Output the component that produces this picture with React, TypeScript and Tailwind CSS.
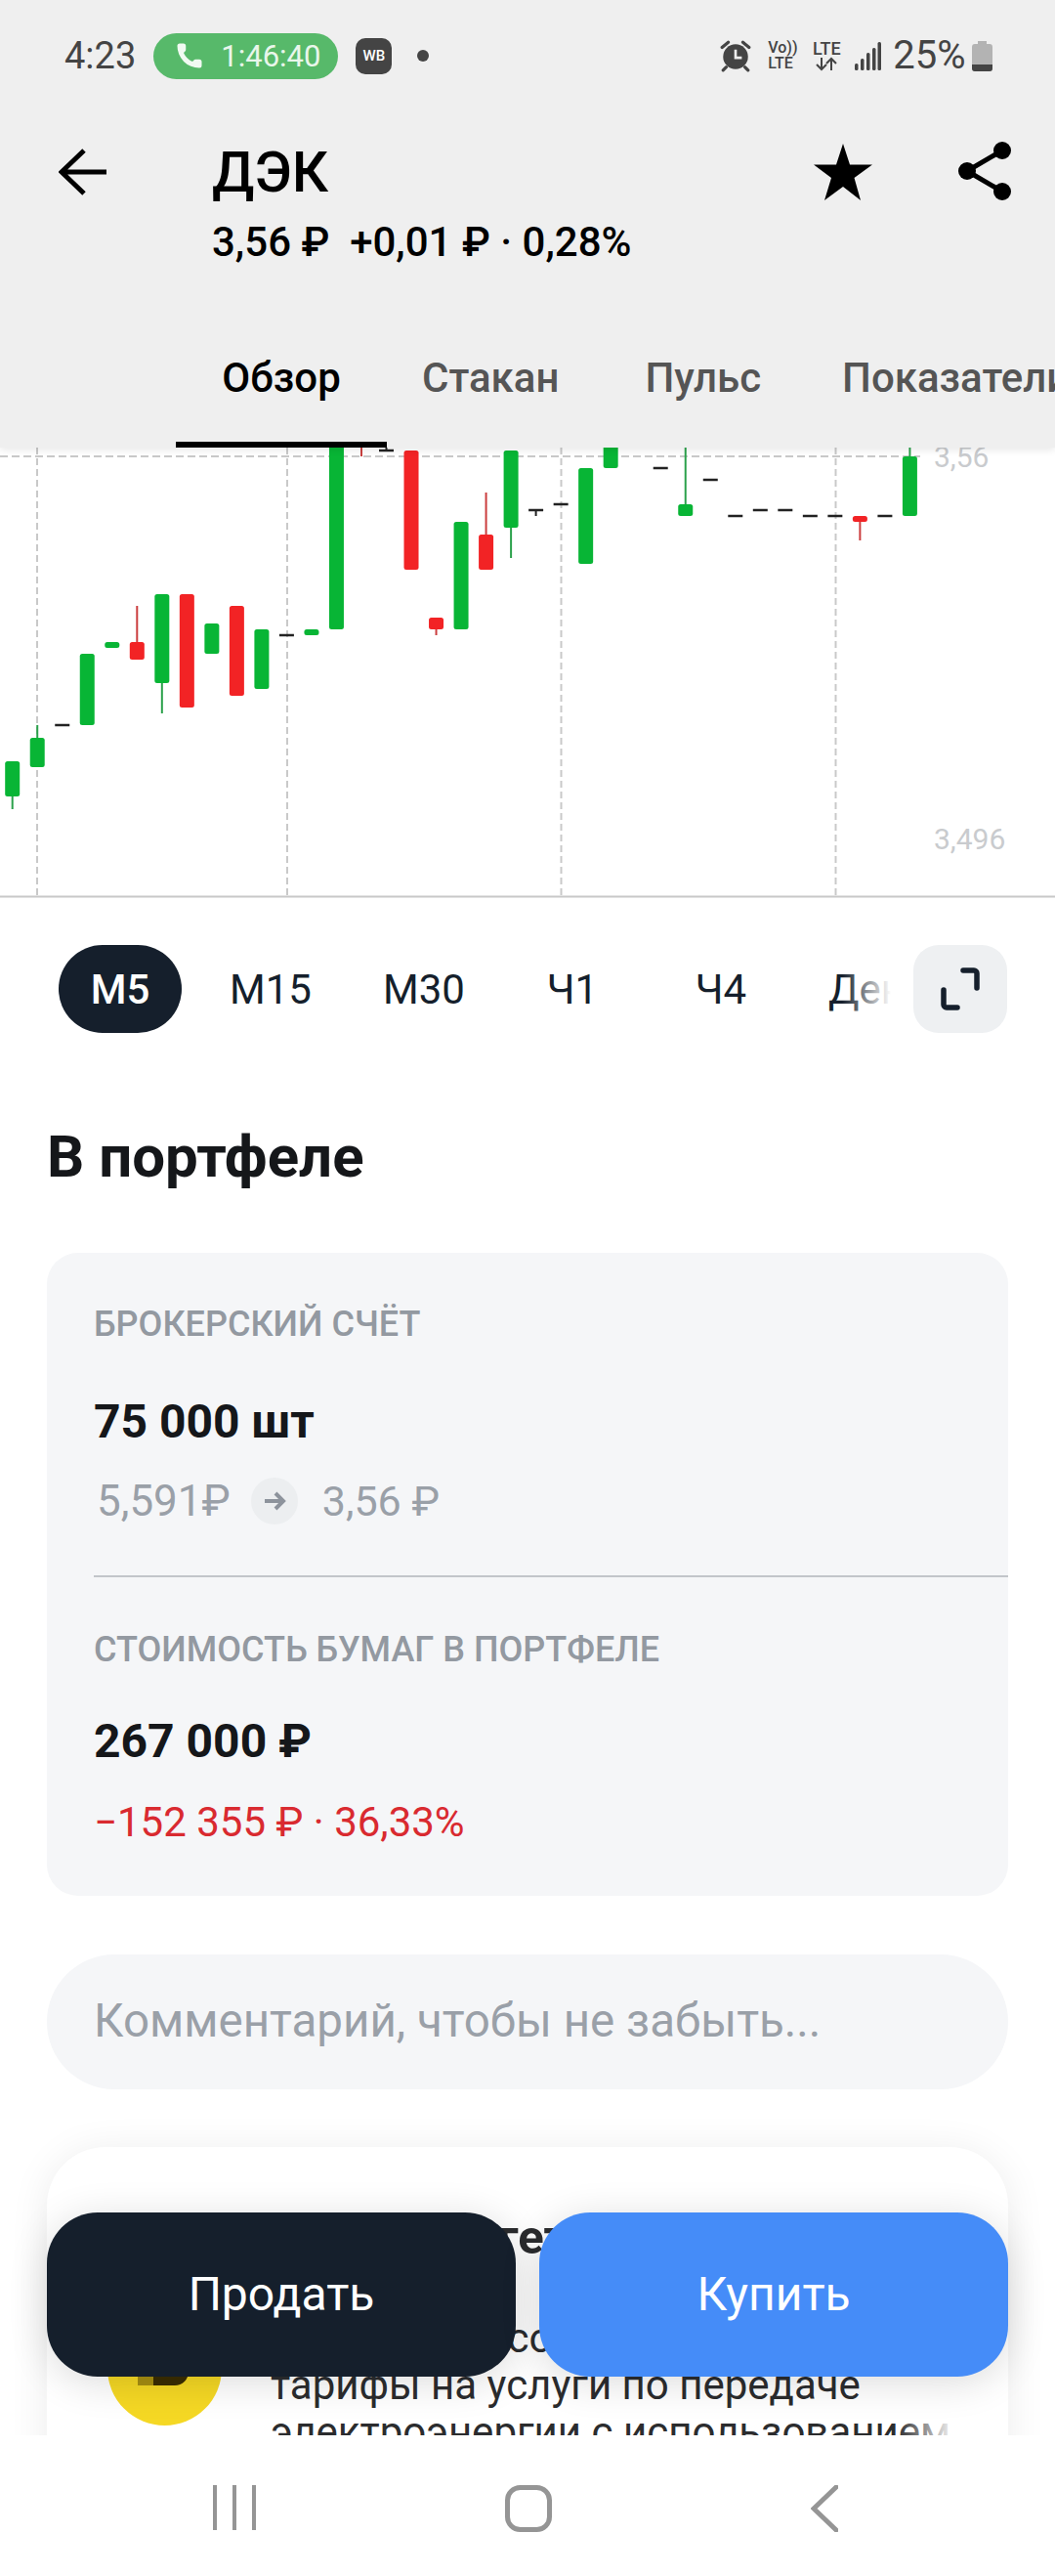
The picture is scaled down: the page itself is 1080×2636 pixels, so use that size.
import { Phone } from 'lucide-react';

const GREEN = '#08b535';
const RED = '#f22325';

// [индекс, верх тела, низ тела, верх тени, низ тени]
type Candle = [number, number, number, number?, number?];

const greenCandles: Candle[] = [
  [0, 779, 815, 779, 828],
  [1, 755, 785, 742, 785],
  [3, 669, 742],
  [4, 657, 663],
  [6, 608, 699, 608, 730],
  [8, 638, 669],
  [10, 644, 705],
  [12, 644, 650],
  [13, 440, 644],
  [18, 534, 644],
  [20, 461, 540, 461, 571],
  [23, 479, 577],
  [24, 440, 479],
  [27, 516, 528, 440, 528],
  [36, 467, 528, 440, 528],
];

const redCandles: Candle[] = [
  [5, 657, 675, 620, 675],
  [7, 608, 724],
  [9, 620, 712],
  [16, 461, 583],
  [17, 632, 644, 632, 650],
  [19, 547, 583, 504, 583],
  [34, 528, 534, 528, 553],
];

const dashes: [number, number][] = [
  [2, 742], [11, 650], [15, 461], [21, 522], [22, 516], [26, 479], [28, 491],
  [29, 528], [30, 522], [31, 522], [32, 528], [33, 528], [35, 528],
];

const candleX = (i: number) => 12.7 + i * 25.52;
const top = 458;

const Chart = () => (
  <svg width="1080" height="461" viewBox={`0 ${top} 1080 461`} className="block">
    {[38, 294, 574.5, 855.5].map((x) => (
      <line key={x} x1={x} x2={x} y1={458} y2={917} stroke="#c9c9c9" strokeWidth="2" strokeDasharray="7 4" />
    ))}
    <line x1={0} x2={942} y1={467} y2={467} stroke="#c9c9c9" strokeWidth="2" strokeDasharray="8 4" />
    <line x1={0} x2={1080} y1={917.5} y2={917.5} stroke="#c8c8c8" strokeWidth="2" />
    <line x1={candleX(14)} x2={candleX(14)} y1={458} y2={467} stroke="#c9403f" strokeWidth="2" />
    <line x1={candleX(15)} x2={candleX(15)} y1={456} y2={461} stroke="#222" strokeWidth="2" />
    <line x1={candleX(21)} x2={candleX(21)} y1={522} y2={528} stroke="#222" strokeWidth="2" />
    {greenCandles.map(([i, a, b, w1, w2]) => (
      <g key={i}>
        {w1 !== undefined && <line x1={candleX(i)} x2={candleX(i)} y1={w1} y2={w2} stroke="#2ba14b" strokeWidth="2" />}
        <rect x={candleX(i) - 7.5} y={a} width="15" height={b - a} rx="2.5" fill={GREEN} />
      </g>
    ))}
    {redCandles.map(([i, a, b, w1, w2]) => (
      <g key={i}>
        {w1 !== undefined && <line x1={candleX(i)} x2={candleX(i)} y1={w1} y2={w2} stroke="#cb3d3e" strokeWidth="2" />}
        <rect x={candleX(i) - 7.5} y={a} width="15" height={b - a} rx="2.5" fill={RED} />
      </g>
    ))}
    {dashes.map(([i, y]) => (
      <line key={i} x1={candleX(i) - 7.5} x2={candleX(i) + 7.5} y1={y} y2={y} stroke="#222" strokeWidth="2.5" />
    ))}
    <text x="956" y="478" fontFamily="Roboto" fontSize="30" fill="#c9cbce">3,56</text>
    <text x="956" y="869" fontFamily="Roboto" fontSize="30" fill="#c9cbce">3,496</text>
  </svg>
);

const StatusBar = () => (
  <div className="h-[114px] flex items-center pl-[66px] text-[#444]">
    <span className="text-[38px] leading-none">4:23</span>
    <div className="ml-[18px] w-[189px] h-[47px] rounded-full bg-[#57b96a] flex items-center text-[#e9f6eb]">
      <Phone size={30} fill="#f1faf2" strokeWidth={0} className="ml-[22px] mr-[17px]" />
      <span className="text-[31px] leading-none">1:46:40</span>
    </div>
    <div className="ml-[18px] w-[37px] h-[37px] rounded-[10px] bg-[#444] text-white text-[15px] font-medium flex items-center justify-center">WB</div>
    <div className="ml-[26px] w-[12px] h-[12px] rounded-full bg-[#444]" />

    {/* будильник */}
    <svg width="32" height="34" viewBox="0 0 30 32" className="ml-[298px]">
      <circle cx="15" cy="17" r="12" fill="#444" />
      <path d="M15 10v8h6" fill="none" stroke="#eee" strokeWidth="2.5" />
      <path d="M2 8l6-5M28 8l-6-5M6 27l-3 3M24 27l3 3" stroke="#444" strokeWidth="3" strokeLinecap="round" />
    </svg>
    <div className="ml-[17px] w-[32px] flex flex-col text-[16px] leading-[16px] font-medium">
      <span>Vo))</span>
      <span>LTE</span>
    </div>
    <div className="ml-[11px] w-[34px] flex flex-col items-center text-[18px] leading-[16px] font-medium">
      <span>LTE</span>
      <svg width="24" height="15" viewBox="0 0 24 15">
        <path d="M7 1v12M2 8l5 5 5-5M17 14V2M12 7l5-5 5 5" fill="none" stroke="#444" strokeWidth="2" />
      </svg>
    </div>
    <svg width="27" height="29" viewBox="0 0 27 29" className="ml-[12px]">
      <rect x="0" y="22" width="3.5" height="7" rx="1.5" fill="#444" />
      <rect x="6" y="17" width="3.5" height="12" rx="1.5" fill="#444" />
      <rect x="12" y="11" width="3.5" height="18" rx="1.5" fill="#444" />
      <rect x="18" y="6" width="3.5" height="23" rx="1.5" fill="#444" />
      <rect x="23.5" y="0" width="3.5" height="29" rx="1.5" fill="#444" />
    </svg>
    <span className="ml-[12px] text-[40px] leading-none">25%</span>
    <svg width="21" height="31" viewBox="0 0 21 31" className="ml-[6px]">
      <path d="M6 0h9v3h3a3 3 0 0 1 3 3v22a3 3 0 0 1-3 3H3a3 3 0 0 1-3-3V6a3 3 0 0 1 3-3h3z" fill="#b3b3b3" />
      <path d="M0 24h21v4a3 3 0 0 1-3 3H3a3 3 0 0 1-3-3z" fill="#444" />
    </svg>
  </div>
);

const Header = () => (
  <div className="relative z-10 h-[458px] bg-[#efefef] flex flex-col shadow-[0_2px_8px_rgba(0,0,0,0.1)]">
    <StatusBar />
    <div className="flex items-start pl-[60px] pr-[45px]">
      <svg width="50" height="48" viewBox="0 0 50 48" className="mt-[38px] mr-[107px]">
        <path d="M26 2L3 24l23 22M3 24h46" fill="none" stroke="#000" strokeWidth="5" />
      </svg>
      <div className="flex flex-col pt-[30px] text-black">
        <span className="text-[58px] leading-[64px] font-medium">ДЭК</span>
        <span className="mt-[17px] text-[42px] leading-[46px] font-medium whitespace-pre">3,56 ₽  +0,01 ₽ · 0,28%</span>
      </div>
      <svg width="60" height="58" viewBox="0 0 60 58" className="ml-auto mt-[33px]">
        <path d="M30 0l7 21.5h23L41.5 35 48 58 30 44 11 58l7-23L0 21.5h23z" fill="#000" />
      </svg>
      <svg width="54" height="60" viewBox="0 0 54 60" className="ml-[88px] mt-[31px]">
        <path d="M45 9L9 30l36 21" fill="none" stroke="#000" strokeWidth="5" />
        <circle cx="45" cy="9" r="9" fill="#000" />
        <circle cx="9" cy="30" r="9" fill="#000" />
        <circle cx="45" cy="51" r="9" fill="#000" />
      </svg>
    </div>
    <div className="mt-auto h-[96px] flex pl-[180px] text-[42px] leading-[50px] font-medium text-[#555] whitespace-nowrap overflow-hidden">
      <div className="w-[216px] shrink-0 h-full text-center text-black border-b-[6px] border-black">Обзор</div>
      <div className="ml-[36px] shrink-0">Стакан</div>
      <div className="ml-[88px] shrink-0">Пульс</div>
      <div className="ml-[83px] shrink-0">Показатели</div>
    </div>
  </div>
);

const Periods = () => (
  <div className="mt-[48px] h-[90px] flex pl-[60px] pr-[48px]">
    <div className="relative w-[852px] flex items-center overflow-hidden text-[42px] text-[#151f2c] whitespace-nowrap">
      <div className="w-[126px] h-[90px] shrink-0 rounded-[45px] bg-[#151f2c] text-white font-medium flex items-center justify-center">М5</div>
      <div className="w-[182px] shrink-0 text-center">М15</div>
      <div className="w-[132px] shrink-0 text-center">М30</div>
      <div className="w-[172px] shrink-0 text-center">Ч1</div>
      <div className="w-[132px] shrink-0 text-center">Ч4</div>
      <div className="pl-[44px] shrink-0">День</div>
      <div className="absolute right-0 inset-y-0 w-[50px] bg-gradient-to-r from-transparent to-white" />
    </div>
    <div className="ml-[23px] w-[96px] h-[90px] rounded-[26px] bg-[#eef0f2] flex items-center justify-center">
      <svg width="44" height="44" viewBox="0 0 44 44">
        <path d="M25 3h11a3 3 0 0 1 3 3v15M5 23v15a3 3 0 0 0 3 3h11" fill="none" stroke="#151f2c" strokeWidth="5.5" strokeLinecap="round" />
      </svg>
    </div>
  </div>
);

const Portfolio = () => (
  <div className="mt-[66px] mx-[48px] rounded-[32px] bg-[#f5f6f8] pt-[51px] pb-[51px] pl-[48px]">
    <div className="text-[36px] leading-[44px] font-medium text-[#9399a1]">БРОКЕРСКИЙ СЧЁТ</div>
    <div className="mt-[50px] text-[48px] leading-[56px] font-bold text-[#15171a]">75 000 шт</div>
    <div className="mt-[29px] h-[48px] flex items-center text-[43px] text-[#9aa0a8]">
      <span className="ml-[3px] text-[44px]">5,591₽</span>
      <div className="ml-[21px] w-[48px] h-[48px] rounded-full bg-[#eceef0] flex items-center justify-center">
        <svg width="24" height="22" viewBox="0 0 24 22">
          <path d="M2 11h19M13 3l8 8-8 8" fill="none" stroke="#8d939c" strokeWidth="4" />
        </svg>
      </div>
      <span className="ml-[25px]">3,56 ₽</span>
    </div>
    <div className="mt-[52px] h-[2px] bg-[#c2c5ca]" />
    <div className="mt-[52px] text-[36px] leading-[44px] font-medium text-[#9399a1]">СТОИМОСТЬ БУМАГ В ПОРТФЕЛЕ</div>
    <div className="mt-[44px] text-[48px] leading-[56px] font-bold text-[#15171a]">267 000 ₽</div>
    <div className="mt-[31px] text-[42px] leading-[48px] text-[#d92a30]">−152 355 ₽ · 36,33%</div>
  </div>
);

const NewsCard = () => (
  <div className="relative mt-[59px] mx-[48px] h-[500px] rounded-[60px] bg-white shadow-[0_4px_40px_rgba(0,0,0,0.08)] flex overflow-hidden">
    <div className="relative mt-[168px] ml-[62px] w-[117px] h-[117px] shrink-0 rounded-full bg-[#f5d824]">
      <div className="absolute left-[31px] top-[20px] w-[16px] h-[56px] bg-[#a78f12]" />
      <div className="absolute left-[47px] top-[20px] w-[36px] h-[56px] rounded-br-[14px] bg-[#3a2d02]" />
    </div>
    <div className="ml-[50px] pt-[65px] w-[700px] text-[#2b2c2e]">
      <div className="text-[49px] leading-[56px] font-bold whitespace-nowrap">ДЭК: энергетика</div>
      <div className="mt-[51px] text-[42px] leading-[48px] whitespace-nowrap">
        <div>Регуляторы согласовали</div>
        <div>тарифы на услуги по передаче</div>
        <div>электроэнергии с использованием</div>
      </div>
    </div>
    <div className="absolute left-[870px] top-[275px] w-[60px] h-[50px] bg-gradient-to-r from-transparent to-white" />
  </div>
);

const BottomBar = () => (
  <div className="absolute inset-x-0 bottom-0 z-20">
    <div className="px-[48px] pb-[60px] flex gap-[24px] text-[48px] text-white">
      <div className="w-[480px] h-[168px] rounded-[52px] bg-[#151f2c] flex items-center justify-center shadow-[0_6px_40px_rgba(0,0,0,0.14)]">Продать</div>
      <div className="w-[480px] h-[168px] rounded-[52px] bg-[#458cf8] flex items-center justify-center shadow-[0_6px_40px_rgba(0,0,0,0.14)]">Купить</div>
    </div>
    <div className="h-[144px] bg-white flex items-start pt-[51px] pl-[218px]">
      <svg width="44" height="46" viewBox="0 0 44 46">
        <path d="M2 0v46M22 0v46M42 0v46" stroke="#959595" strokeWidth="4" />
      </svg>
      <svg width="48" height="48" viewBox="0 0 48 48" className="ml-[255px]">
        <rect x="2.5" y="2.5" width="43" height="43" rx="13" fill="none" stroke="#959595" strokeWidth="5" />
      </svg>
      <svg width="28" height="48" viewBox="0 0 28 48" className="ml-[265px]">
        <path d="M26 2L3 24l23 22" fill="none" stroke="#959595" strokeWidth="5" strokeLinecap="round" />
      </svg>
    </div>
  </div>
);

export default function App() {
  return (
    <div className="relative w-[1080px] h-[2636px] overflow-hidden bg-white font-['Roboto',sans-serif]">
      <Header />
      <Chart />
      <Periods />
      <h2 className="mt-[95px] ml-[48px] text-[60px] leading-[64px] font-bold text-[#15171a]">В портфеле</h2>
      <Portfolio />
      <div className="mt-[60px] mx-[48px] h-[138px] rounded-full bg-[#f5f6f8] flex items-center pl-[48px] text-[47.5px] text-[#9aa0a8]">
        Комментарий, чтобы не забыть...
      </div>
      <NewsCard />
      <BottomBar />
    </div>
  );
}
